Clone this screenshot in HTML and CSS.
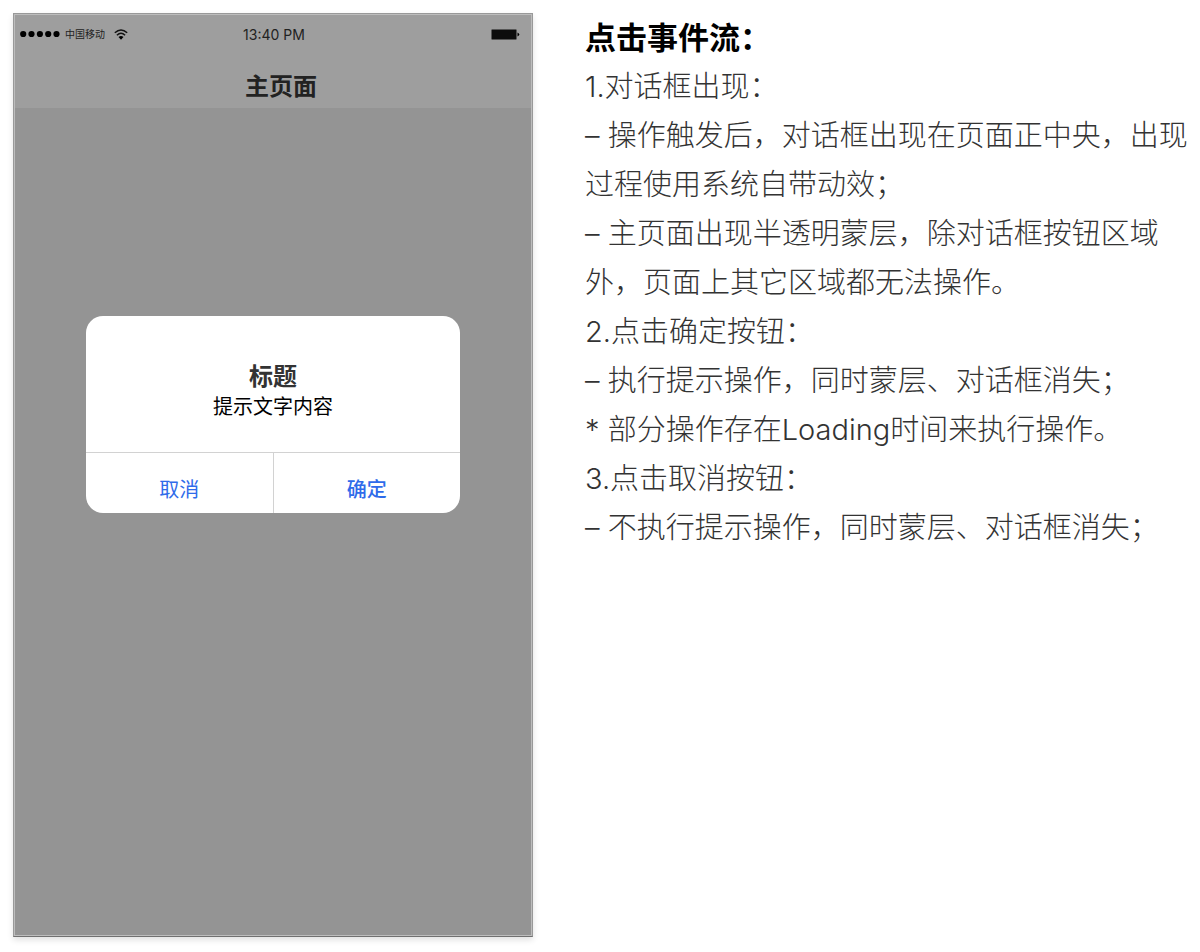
FILE: index.html
```
<!DOCTYPE html>
<html lang="zh-CN">
<head>
    <meta charset="UTF-8">
    <meta name="viewport" content="width=device-width, initial-scale=1.0">
    <title>对话框 - 点击事件流</title>
    <link rel="stylesheet" href="styles.css">
</head>
<body>
    <div class="phone">
        <header class="top">
            <div class="status">
                <div class="signal">
                    <svg width="40" height="8" viewBox="0 0 40 8" aria-hidden="true">
                        <circle cx="3.2" cy="4" r="3.1"/>
                        <circle cx="11.5" cy="4" r="3.1"/>
                        <circle cx="19.9" cy="4" r="3.1"/>
                        <circle cx="28.2" cy="4" r="3.1"/>
                        <circle cx="36.5" cy="4" r="3.1"/>
                    </svg>
                    <span class="carrier">中国移动</span>
                    <svg width="14" height="11" viewBox="0 0 14 11" aria-hidden="true">
                        <path d="M.8 3.8Q7-1.8 13.2 3.8" fill="none" stroke="#111" stroke-width="1.5"/>
                        <path d="M2.9 6.2Q7 2.4 11.1 6.2" fill="none" stroke="#111" stroke-width="1.5"/>
                        <path d="M4.5 8Q7 6 9.5 8L7 10.8z"/>
                    </svg>
                </div>
                <span class="time">13:40 PM</span>
                <svg class="battery" width="29" height="11" viewBox="0 0 29 11" aria-hidden="true">
                    <rect x=".5" y=".5" width="25" height="10" rx="1" fill="#0d0d0d" stroke="#555"/>
                    <path d="M26.5 3.5q3.5 2 0 4z"/>
                </svg>
            </div>
            <h1>主页面</h1>
        </header>
        <main class="screen">
            <div class="dialog" role="dialog" aria-labelledby="dialogTitle">
                <div class="message">
                    <h2 id="dialogTitle">标题</h2>
                    <p>提示文字内容</p>
                </div>
                <div class="actions">
                    <button type="button" class="cancel">取消</button>
                    <button type="button" class="confirm">确定</button>
                </div>
            </div>
        </main>
    </div>

    <section class="notes">
        <h2>点击事件流：</h2>
        <p>1.对话框出现：</p>
        <p>– 操作触发后，对话框出现在页面正中央，出现过程使用系统自带动效；</p>
        <p>– 主页面出现半透明蒙层，除对话框按钮区域外，页面上其它区域都无法操作。</p>
        <p>2.点击确定按钮：</p>
        <p>– 执行提示操作，同时蒙层、对话框消失；</p>
        <p>* 部分操作存在Loading时间来执行操作。</p>
        <p>3.点击取消按钮：</p>
        <p>– 不执行提示操作，同时蒙层、对话框消失；</p>
    </section>
</body>
</html>
```
FILE: styles.css
```
* {
    box-sizing: border-box;
}
body {
    font-family: Inter, "Noto Sans CJK SC", sans-serif;
    display: flex;
    gap: 52px;
    min-height: 100vh;
    margin: 0;
    padding: 13px 8px 15px 13px;
    background-color: #fff;
    color: #333;
}
h1, h2, p {
    margin: 0;
}

/* phone */
.phone {
    display: flex;
    flex-direction: column;
    flex: 0 1 520px;
    border: 1px solid #999;
    border-bottom-color: #707070;
    outline: 1px solid #bdbdbd;
    outline-offset: -2px;
    background-color: #949494;
    box-shadow: 0 3px 6px rgba(0, 0, 0, 0.12);
}
.top {
    height: 94px;
    padding-top: 9px;
    background-color: #9e9e9e;
    color: #222;
}
.status {
    display: grid;
    grid-template-columns: 1fr auto 1fr;
    align-items: center;
    height: 20px;
    padding: 0 12px 0 6px;
}
.signal {
    display: flex;
    align-items: center;
    gap: 5px;
}
.carrier {
    margin-right: 4px;
    font-size: 10px;
    line-height: 14px;
}
.time {
    padding: 2px 0 0 8px;
    font-size: 14px;
    line-height: 20px;
}
.battery {
    justify-self: end;
}
.top h1 {
    margin-top: 26px;
    padding-left: 16px;
    font-size: 24px;
    font-weight: 700;
    line-height: 36px;
    text-align: center;
}
.screen {
    flex: 1;
    padding-top: 208px;
}

/* dialog */
.dialog {
    width: 374px;
    max-width: 90%;
    margin: 0 auto;
    border-radius: 17px;
    background-color: #fff;
    overflow: hidden;
}
.message {
    padding: 46px 20px 30px;
    text-align: center;
}
.message h2 {
    font-size: 24px;
    font-weight: 700;
    line-height: 30px;
}
.message p {
    color: #000;
    font-size: 20px;
    line-height: 30px;
}
.actions {
    display: flex;
    border-top: 1px solid #d2d2d2;
}
.actions button {
    flex: 1;
    height: 60px;
    padding: 14px 0 0;
    border: none;
    background: none;
    color: #2f6bea;
    font-family: inherit;
    font-size: 20px;
    line-height: 30px;
    cursor: pointer;
}
.actions .cancel {
    border-right: 1px solid #d2d2d2;
}
.actions .confirm {
    font-weight: 500;
}
.actions button:hover {
    background-color: #f5f5f5;
}

/* notes */
.notes {
    flex: 1;
    font-size: 29px;
    font-weight: 300;
    line-height: 49px;
}
.notes h2 {
    color: #000;
    font-size: 31px;
    font-weight: 700;
}
```
